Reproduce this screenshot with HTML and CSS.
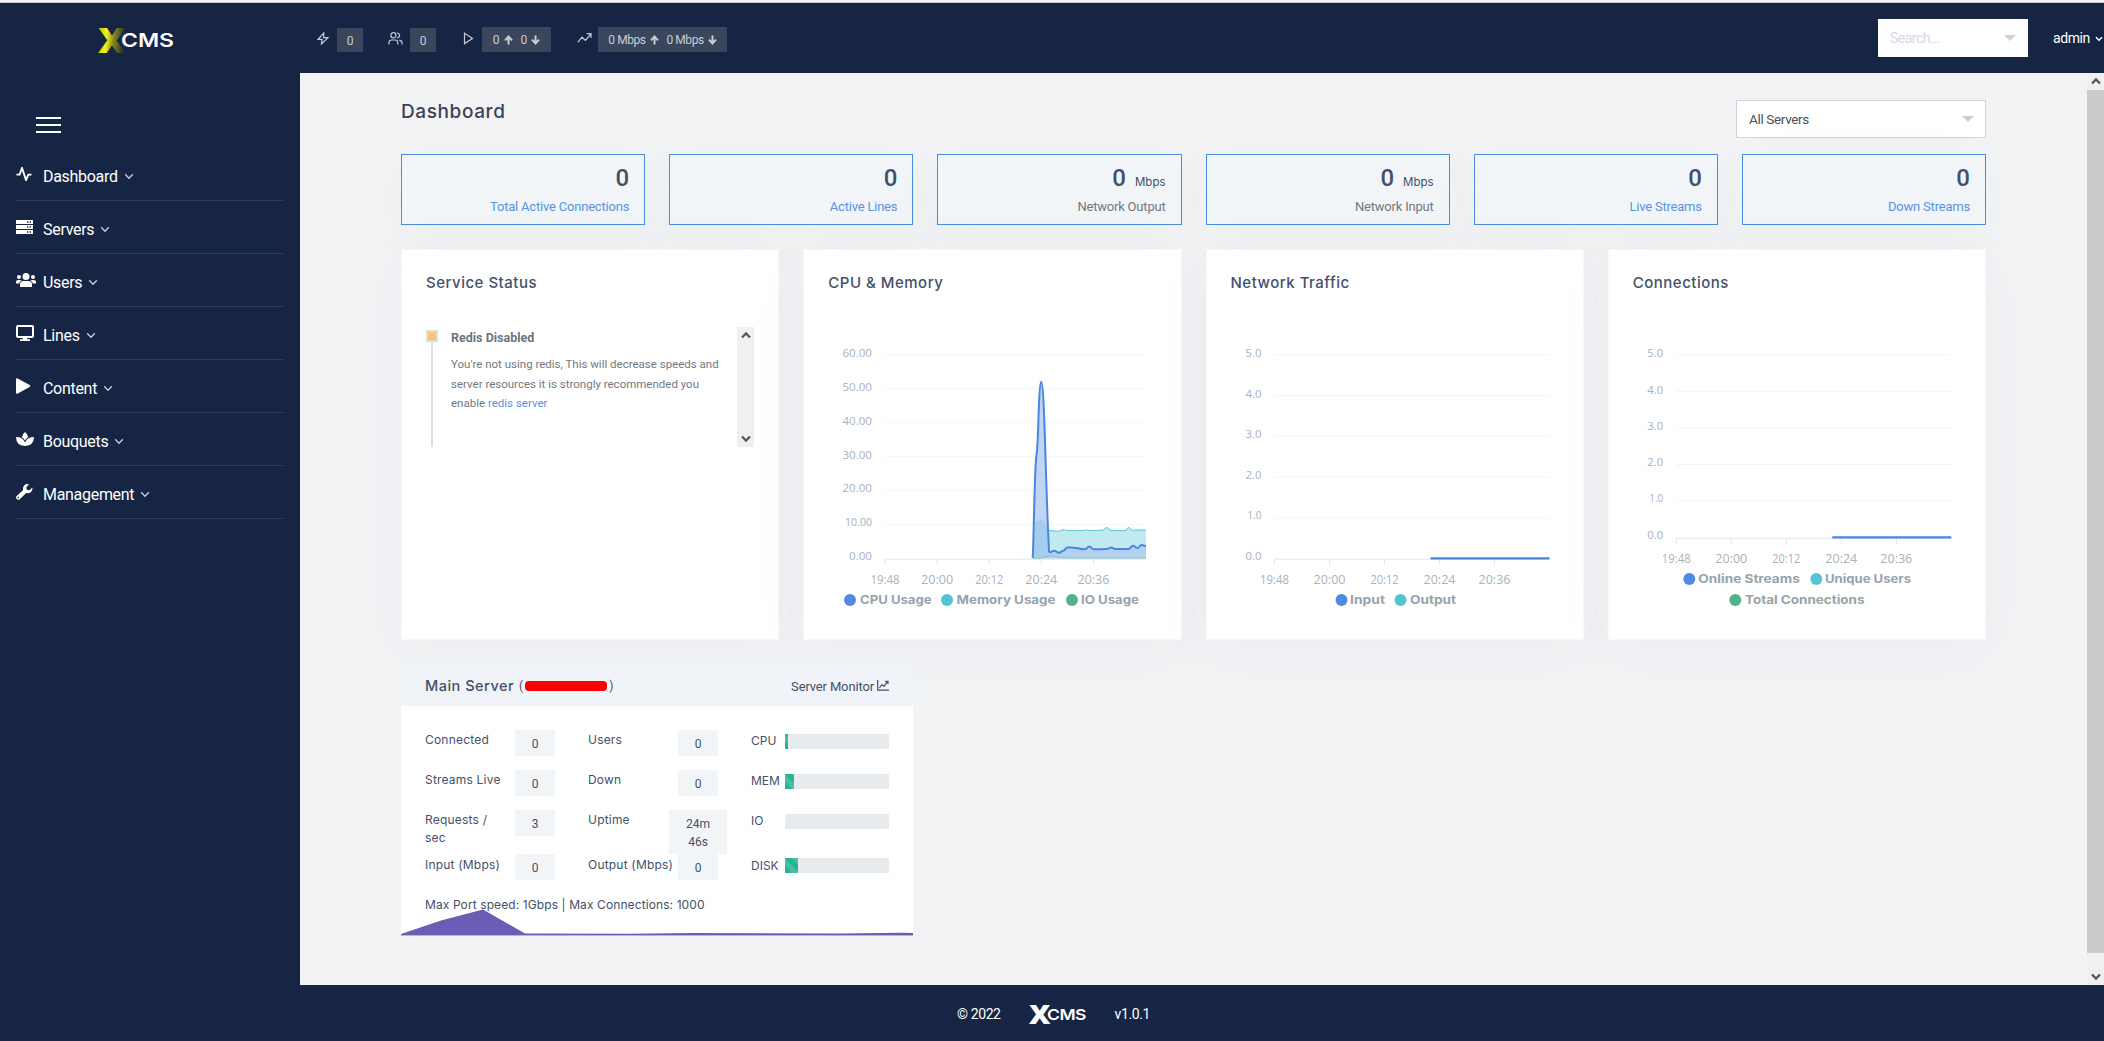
FILE: index.html
```html
<!DOCTYPE html>
<html lang="en">
<head>
  <meta charset="UTF-8">
  <title>XCMS - Dashboard</title>
  <link rel="stylesheet" href="styles.css">
</head>
<body>
  <!-- shared icons -->
  <svg class="sprite">
    <symbol id="down" viewBox="0 0 10 7"><path d="M1.2 1.3 5 5.2 8.8 1.3" fill="none" stroke="currentColor" stroke-width="1.3"/></symbol>
    <symbol id="arrow-up" viewBox="0 0 9 10"><path d="M4.5 9.6V2M1 5.4 4.5 1.6 8 5.4" fill="none" stroke="currentColor" stroke-width="2"/></symbol>
    <symbol id="arrow-down" viewBox="0 0 9 10"><path d="M4.5.4V8M1 4.6 4.5 8.4 8 4.6" fill="none" stroke="currentColor" stroke-width="2"/></symbol>
    <symbol id="sb-up" viewBox="0 0 10 8"><path d="M1 6.5 5 2.4l4 4.1" fill="none" stroke="#555" stroke-width="2.2"/></symbol>
    <symbol id="sb-down" viewBox="0 0 10 8"><path d="M1 1.5 5 5.6l4-4.1" fill="none" stroke="#555" stroke-width="2.2"/></symbol>
  </svg>

  <header class="topbar">
    <div class="brand">
      <svg width="80" height="30" viewBox="0 0 80 30">
        <defs>
          <linearGradient id="gold" x1="0" y1="0" x2="1" y2="0.15">
            <stop offset="0" stop-color="#b8b800"/>
            <stop offset="0.35" stop-color="#f4f21c"/>
            <stop offset="0.6" stop-color="#8a8a10"/>
            <stop offset="1" stop-color="#1a2440"/>
          </linearGradient>
        </defs>
        <text class="logo-x" x="1" y="27" textLength="28" lengthAdjust="spacingAndGlyphs" fill="url(#gold)">X</text>
        <text class="logo-cms" x="24" y="21" textLength="53" lengthAdjust="spacingAndGlyphs">CMS</text>
      </svg>
    </div>
    <div class="stats">
      <div class="stat s1">
        <svg width="12" height="13" viewBox="0 0 12 13"><path d="M6.8 1 1 7.4h4L4.4 12 11 5.6H6.6z" class="line"/></svg>
        <span class="pill small">0</span>
      </div>
      <div class="stat s2">
        <svg width="15" height="13" viewBox="0 0 15 13"><g class="line"><circle cx="5.4" cy="3.3" r="2.6"/><path d="M1 12.6V10.6Q1 8 3.6 8H7.2Q9.8 8 9.8 10.6V12.6M9.2.8Q11.6 1.4 11.6 3.4 11.6 5.2 9.2 5.9M11.2 8.2Q14 8.6 14 11V12.6"/></g></svg>
        <span class="pill small">0</span>
      </div>
      <div class="stat s3">
        <svg width="11" height="13" viewBox="0 0 11 13"><path d="M1.5 1.2 9.5 6.4 1.5 11.6z" class="line"/></svg>
        <span class="pill"><span>0</span><svg width="9" height="10"><use href="#arrow-up"/></svg><span class="second">0</span><svg width="9" height="10"><use href="#arrow-down"/></svg></span>
      </div>
      <div class="stat s4">
        <svg width="15" height="12" viewBox="0 0 15 12"><path d="M.8 10.4 5 5.2 8.4 8.4 13.8 2M9.6 1.6H14V6" class="line"/></svg>
        <span class="pill wide"><span>0 Mbps</span><svg width="9" height="10"><use href="#arrow-up"/></svg><span class="second">0 Mbps</span><svg width="9" height="10"><use href="#arrow-down"/></svg></span>
      </div>
    </div>
    <div class="search"><span>Search...</span><i class="caret"></i></div>
    <div class="user">admin <svg width="8" height="6" viewBox="0 0 8 6"><path d="M1 1.2 4 4.2 7 1.2" fill="none" stroke="#fff" stroke-width="1.5"/></svg></div>
  </header>

  <div class="wrapper">
    <nav class="sidebar">
      <div class="burger"><i></i><i></i><i></i></div>
      <ul class="menu">
        <li>
          <svg class="icon" width="16" height="14" viewBox="0 0 16 14"><path d="M.5 7.6H3.6L6 1 10 13 12.4 7.6H15.5" fill="none" stroke="#fff" stroke-width="1.9"/></svg>
          <span>Dashboard</span><svg class="chev"><use href="#down"/></svg>
        </li>
        <li>
          <svg class="icon" width="17" height="14" viewBox="0 0 17 14"><path d="M0 0H17V4H0zM0 5.1H17V9H0zM0 10.1H17V14H0z" fill="#fff"/><path d="M11 2h1.4M13.6 2H15M11 7h1.4M13.6 7H15M11 12h1.4M13.6 12H15" stroke="#172545" stroke-width="1.4"/></svg>
          <span>Servers</span><svg class="chev"><use href="#down"/></svg>
        </li>
        <li>
          <svg class="icon" width="20" height="14" viewBox="0 0 20 14"><g fill="#fff"><circle cx="10" cy="3.6" r="3.5"/><circle cx="3" cy="4" r="2"/><circle cx="17" cy="4" r="2"/><path d="M4 14V11.4Q4 8 7.4 8H12.6Q16 8 16 11.4V14zM0 10.6V9Q0 7 2 7H4Q5 7 5.6 7.6 3.4 8.6 3.2 10.6zM20 10.6V9Q20 7 18 7H16Q15 7 14.4 7.6 16.6 8.6 16.8 10.6z"/></g></svg>
          <span>Users</span><svg class="chev"><use href="#down"/></svg>
        </li>
        <li>
          <svg class="icon" width="18" height="16" viewBox="0 0 18 16"><rect x="1" y="1" width="16" height="11" rx="1" fill="none" stroke="#fff" stroke-width="2"/><path d="M7 12.5h4l.5 1.8H14V16H4V14.3H6.5z" fill="#fff"/></svg>
          <span>Lines</span><svg class="chev"><use href="#down"/></svg>
        </li>
        <li>
          <svg class="icon" width="15" height="16" viewBox="0 0 15 16"><path d="M0 1.2Q.2-.4 1.8.4L13.6 7Q15 8 13.6 9L1.8 15.6Q.2 16.4 0 14.8z" fill="#fff"/></svg>
          <span>Content</span><svg class="chev"><use href="#down"/></svg>
        </li>
        <li>
          <svg class="icon" width="18" height="14" viewBox="0 0 18 14"><path d="M9 0Q12 2.4 12.2 5.2 10 6.6 9 8.4 8 6.6 5.8 5.2 6 2.4 9 0zM0 5Q6.6 5 9 10.4 11.4 5 18 5 17.8 13.8 9 14 .2 13.8 0 5z" fill="#fff"/></svg>
          <span>Bouquets</span><svg class="chev"><use href="#down"/></svg>
        </li>
        <li>
          <svg class="icon" width="17" height="16" viewBox="0 0 17 16"><path d="M16.3 3.6 13.4 6.3 10.8 5.8 10.3 3.2 13 .4Q10.3-.6 8.2 1.4 6.4 3.3 7.2 5.9L.7 12.1Q-.6 13.6.7 15.1 2.2 16.5 3.7 15.2L10.2 8.9Q13 9.7 15 7.9 16.9 6 16.3 3.6z" fill="#fff"/><circle cx="2.3" cy="13.6" r=".8" fill="#172545"/></svg>
          <span>Management</span><svg class="chev"><use href="#down"/></svg>
        </li>
      </ul>
    </nav>

    <main class="content">
      <div class="page-head">
        <h1>Dashboard</h1>
        <div class="select"><span>All Servers</span><i class="caret"></i></div>
      </div>

      <section class="tiles">
        <div class="tile"><b>0</b><a>Total Active Connections</a></div>
        <div class="tile"><b>0</b><a>Active Lines</a></div>
        <div class="tile"><b>0 <small>Mbps</small></b><span>Network Output</span></div>
        <div class="tile"><b>0 <small>Mbps</small></b><span>Network Input</span></div>
        <div class="tile"><b>0</b><a>Live Streams</a></div>
        <div class="tile"><b>0</b><a>Down Streams</a></div>
      </section>

      <section class="cards">
        <div class="card">
          <h2>Service Status</h2>
          <div class="status">
            <div class="track"><i></i></div>
            <div class="status-text">
              <h3>Redis Disabled</h3>
              <p>You're not using redis, This will decrease speeds and<br>server resources it is strongly recommended you<br>enable <a>redis server</a></p>
            </div>
            <div class="mini-scroll">
              <svg width="10" height="8"><use href="#sb-up"/></svg>
              <svg width="10" height="8"><use href="#sb-down"/></svg>
            </div>
          </div>
        </div>
        <div class="card"><h2>CPU &amp; Memory</h2><svg class="chart" id="cpuChart"></svg></div>
        <div class="card"><h2>Network Traffic</h2><svg class="chart" id="netChart"></svg></div>
        <div class="card"><h2>Connections</h2><svg class="chart" id="connChart"></svg></div>
      </section>

      <section class="server">
        <div class="server-head">
          <h2>Main Server</h2>
          <span class="ip">(<i></i>)</span>
          <a>Server Monitor <svg width="12" height="11" viewBox="0 0 12 11"><path d="M.7 0V10.2H12M2.4 8 5 4.6 7 6.4 10.8 1.4M8.2 1.4H11V4" fill="none" stroke="#44506a" stroke-width="1.2"/></svg></a>
        </div>
        <div class="server-body">
          <div class="row">
            <label>Connected</label><span class="val">0</span>
            <label>Users</label><span class="val">0</span>
            <label>CPU</label><div class="bar"><i style="width:3%"></i></div>
          </div>
          <div class="row">
            <label>Streams Live</label><span class="val">0</span>
            <label>Down</label><span class="val">0</span>
            <label>MEM</label><div class="bar"><i style="width:8.7%"></i></div>
          </div>
          <div class="row tall">
            <label>Requests /<br>sec</label><span class="val">3</span>
            <label>Uptime</label><span class="val uptime">24m<br>46s</span>
            <label>IO</label><div class="bar"></div>
          </div>
          <div class="row last">
            <label>Input (Mbps)</label><span class="val">0</span>
            <label>Output (Mbps)</label><span class="val">0</span>
            <label>DISK</label><div class="bar"><i style="width:12.5%"></i></div>
          </div>
          <p class="limits">Max Port speed: 1Gbps | Max Connections: 1000</p>
        </div>
        <svg class="spark" width="512" height="28" viewBox="0 0 512 28">
          <path d="M0 26 40 12.5 82 1.5 124 25.5 230 25.8 290 25 440 25.4 500 24.8 512 25V27H0z" fill="#6a5db5"/>
          <path d="M0 27.5H512" stroke="#b9b2dc"/>
        </svg>
      </section>
    </main>

    <div class="scrollbar">
      <svg width="10" height="8"><use href="#sb-up"/></svg>
      <div class="thumb"></div>
      <svg width="10" height="8"><use href="#sb-down"/></svg>
    </div>
  </div>

  <footer class="footer">
    <span>© 2022</span>
    <svg width="60" height="24" viewBox="0 0 60 24">
      <text class="logo-x foot" x="1" y="21.5" textLength="21" lengthAdjust="spacingAndGlyphs">X</text>
      <text class="logo-cms foot" x="19" y="17.5" textLength="39" lengthAdjust="spacingAndGlyphs">CMS</text>
    </svg>
    <span>v1.0.1</span>
  </footer>

  <script>
    const times = ['19:48', '20:00', '20:12', '20:24', '20:36'];
    const timeWidths = [29, 32, 28, 32, 32];

    function label(x, y, str, width, anchor, cls) {
      return `<text x="${x}" y="${y}" text-anchor="${anchor}" class="${cls}" textLength="${width}" lengthAdjust="spacingAndGlyphs">${str}</text>`;
    }

    // grid, axis, tick labels and legend
    function drawChart(id, o) {
      let out = '';
      const n = o.labels.length - 1;
      o.labels.forEach((t, i) => {
        const y = o.top + (o.bottom - o.top) * i / n;
        if (i < n) out += `<line class="grid" x1="${o.left}" x2="${o.right}" y1="${y}" y2="${y}"/>`;
        out += label(o.left - 13, y + 2.6 - 1.6 * i / n, t, o.labelWidth(t), 'end', 'tick');
      });
      out += `<line class="axis" x1="${o.left}" x2="${o.right}" y1="${o.bottom + .5}" y2="${o.bottom + .5}"/>`;
      times.forEach((t, i) => {
        const x = o.left + o.step * i;
        out += `<line class="axis" x1="${x}" x2="${x}" y1="${o.bottom}" y2="${o.bottom + 6.5}"/>`;
        out += label(x, o.bottom + 25, t, timeWidths[i], 'middle', 'time');
      });
      out += o.series;
      o.legend.forEach(l => {
        out += `<circle cx="${l[0]}" cy="${l[1]}" r="6" fill="${l[2]}"/>`;
        out += label(l[3], l[1] + 4, l[4], l[5], 'start', 'legend');
      });
      document.getElementById(id).innerHTML = out;
    }

    // smooth line through the points
    function curve(points) {
      let d = `M${points[0]}`;
      for (let i = 1; i < points.length; i++) {
        const [x0, y0] = points[i - 1], [x1, y1] = points[i], m = (x0 + x1) / 2;
        d += `C${m} ${y0} ${m} ${y1} ${x1} ${y1}`;
      }
      return d;
    }

    const cpu = 'M204.7 249C206 225 206.5 155 208.5 146C210.5 136 210.5 73 213.3 72.7C216.5 73 217.5 175 221 242';
    const cpuTail = curve([[221, 242], [222, 243.5], [226.3, 241.7], [231, 243.7], [235.3, 241.7], [239.3, 238.5], [245.3, 238.7], [257, 240.3], [261.3, 237.5], [265.7, 240.3], [278.7, 240], [283, 238.5], [287.3, 240], [300.3, 240], [305, 236.7], [309.3, 239], [313.7, 236], [318, 237.3]]).replace('M221,242', '');
    const mem = curve([[205.5, 214], [209, 213.7], [213.3, 211], [221.3, 221.5], [231, 222.2], [235, 220.8], [240, 221.6], [254, 221.6], [257, 221], [262, 221.6], [274, 221.2], [279, 218.6], [283, 221.6], [297, 221.6], [300.7, 218.5], [304, 221.2], [318, 221]]);

    drawChart('cpuChart', {
      left: 57, right: 318, top: 45.8, bottom: 249.7, step: 52.1,
      labels: ['60.00', '50.00', '40.00', '30.00', '20.00', '10.00', '0.00'],
      labelWidth: t => t.length > 4 ? (t[0] == '1' ? 27 : 29.5) : 23,
      series: `<path d="${mem}V249.5H205.5Z" fill="#56c2d6" fill-opacity=".37"/>
        <path d="${mem}" fill="none" stroke="#56c2d6"/>
        <path d="${cpu + cpuTail}V249.5H204.7Z" fill="#b0c9f0" fill-opacity=".8"/>
        <path d="${cpu + cpuTail}" fill="none" stroke="#4a86dc" stroke-width="2"/>
        <path d="M206 249V214L209 213.7Q213.3 208 220 221V242L222 249Z" fill="#56c2d6" fill-opacity=".15"/>
        <path d="M205 249.5H214Q220 246.2 223 246.5 230 248.5 244 249H318" fill="none" stroke="#52b08a" stroke-opacity=".4"/>`,
      legend: [[22, 291, '#4f8ae0', 32, 'CPU Usage', 71.5], [119, 291, '#56c2d6', 128.5, 'Memory Usage', 99], [244, 291, '#52b08a', 253, 'IO Usage', 58]]
    });
    drawChart('netChart', {
      left: 43.5, right: 318.5, top: 45.8, bottom: 249.7, step: 55,
      labels: ['5.0', '4.0', '3.0', '2.0', '1.0', '0.0'],
      labelWidth: t => t[0] == '1' ? 14 : 16,
      series: '<path d="M199.5 249.3H318.5" stroke="#4a86dc" stroke-width="2.3"/>',
      legend: [[110.5, 291, '#4f8ae0', 119, 'Input', 35], [169.5, 291, '#56c2d6', 179, 'Output', 46]]
    });
    drawChart('connChart', {
      left: 43.3, right: 318.3, top: 45.8, bottom: 228.7, step: 55,
      labels: ['5.0', '4.0', '3.0', '2.0', '1.0', '0.0'],
      labelWidth: t => t[0] == '1' ? 14 : 16,
      series: '<path d="M199.3 228.3H318.3" stroke="#4a86dc" stroke-width="2.3"/>',
      legend: [[56.3, 270, '#4f8ae0', 65.3, 'Online Streams', 101.5], [183.3, 270, '#56c2d6', 192, 'Unique Users', 86], [102.3, 291, '#52b08a', 112, 'Total Connections', 119.5]]
    });
  </script>
</body>
</html>
```

FILE: styles.css
```css
* {
  box-sizing: border-box;
}
body {
  margin: 0;
  height: 1041px;
  display: flex;
  flex-direction: column;
  overflow: hidden;
  font-family: Roboto, "Liberation Sans", sans-serif;
  font-size: 14px;
  color: #44506a;
  background: #172545;
}
h1, h2, h3, p, ul {
  margin: 0;
  padding: 0;
}
.sprite {
  display: none;
}
a {
  color: #5c92e4;
}
.line {
  fill: none;
  stroke: #c3c8d3;
  stroke-width: 1.2;
}

/* header */
.topbar {
  height: 73px;
  flex: none;
  display: flex;
  align-items: flex-start;
  border-top: 2px solid #f4f4f6;
  box-shadow: inset 0 1px 0 #c9cbd2;
}
.brand {
  width: 300px;
  padding: 24px 0 0 97px;
}
.brand svg,
.footer svg {
  display: block;
  overflow: visible;
}
.logo-x {
  font: 800 35px "Open Sans", sans-serif;
}
.logo-cms {
  font: 600 19px Inter, sans-serif;
  fill: #fff;
}
.logo-x.foot {
  font-size: 27px;
  fill: #fff;
}
.logo-cms.foot {
  font-size: 15px;
}
.stats {
  display: flex;
  width: 1578px;
  padding: 25px 0 0 17px;
}
.stat {
  display: flex;
  align-items: flex-start;
}
.stat > svg {
  margin-top: 5px;
}
.s1 { width: 71px; gap: 8px; }
.s2 { width: 75px; gap: 7px; }
.s3 { width: 114px; gap: 8px; }
.s4 { gap: 6px; }
.pill {
  width: 69px;
  height: 25px;
  padding-top: 1px;
  display: flex;
  align-items: center;
  justify-content: center;
  gap: 4px;
  background: #3a465c;
  color: #c9cdd6;
  font-size: 12px;
  white-space: nowrap;
}
.pill.small {
  width: 26px;
  height: 24px;
  margin-top: 1px;
  padding-top: 2px;
}
.pill.wide {
  width: 129px;
  letter-spacing: -0.45px;
}
.second {
  margin-left: 4px;
}
.search {
  width: 150px;
  height: 38px;
  margin-top: 17px;
  padding: 0 12px;
  display: flex;
  align-items: center;
  justify-content: space-between;
  background: #fff;
  color: #d3d8e6;
  letter-spacing: -0.5px;
}
.caret {
  border: 6px solid transparent;
  border-top-color: #ccd1e2;
  border-bottom: 0;
}
.user {
  padding: 28px 0 0 25px;
  color: #fff;
  letter-spacing: -0.4px;
  white-space: nowrap;
}
.user svg {
  margin: 0 0 1px 2px;
}

/* sidebar */
.wrapper {
  height: 912px;
  flex: none;
  display: flex;
}
.sidebar {
  width: 300px;
  padding: 44px 16px 0;
}
.burger {
  width: 25px;
  margin-left: 20px;
  display: grid;
  gap: 5px;
}
.burger i {
  height: 2px;
  background: #fff;
}
.menu {
  margin-top: 15px;
  list-style: none;
}
.menu li {
  height: 53px;
  padding-top: 4px;
  display: grid;
  grid-template-columns: 27px auto 1fr;
  align-items: center;
  border-bottom: 1px solid #2f3b59;
  color: #fff;
  font-size: 16px;
  letter-spacing: -0.3px;
}
.menu .icon {
  margin-bottom: 4px;
}
.chev {
  width: 10px;
  height: 7px;
  margin-left: 6px;
  color: #c9cdd8;
}

/* content */
.content {
  width: 1787px;
  padding: 27px 101px 0;
  background: #f2f3f5;
  overflow: hidden;
}
.page-head {
  height: 54px;
  display: flex;
  justify-content: space-between;
}
h1 {
  font: 500 19px/24px Inter, sans-serif;
  letter-spacing: 0.6px;
  color: #3b4357;
}
.select {
  width: 250px;
  height: 38px;
  padding: 0 11px 0 12px;
  display: flex;
  align-items: center;
  justify-content: space-between;
  border: 1px solid #ced4da;
  background: #fff;
  color: #495057;
  font-size: 13.5px;
  letter-spacing: -0.35px;
}
.select .caret {
  border-top-color: #c0d0dc;
}
.tiles {
  display: grid;
  grid-template-columns: repeat(6, 1fr);
  gap: 24px;
}
.tile {
  height: 71px;
  padding: 10px 15px 0;
  border: 1px solid #4d8be0;
  background: #f1f5f8;
  box-shadow: 0 10px 60px rgba(70, 80, 110, 0.03);
  text-align: right;
  color: #74787e;
}
.tile b {
  display: block;
  height: 33px;
  line-height: 26px;
  font-size: 24px;
  font-weight: 500;
  color: #44506a;
}
.tile small {
  margin-left: 3px;
  font: 400 11.5px Inter, sans-serif;
}
.tile a,
.tile span {
  display: block;
  line-height: 17px;
  font-size: 13px;
  letter-spacing: -0.2px;
}
.cards {
  margin-top: 24px;
  display: grid;
  grid-template-columns: repeat(4, minmax(0, 1fr));
  gap: 24px;
}
.card {
  height: 391px;
  padding: 23px 24px;
  border: 1px solid #f6f8f9;
  background: #fff;
  box-shadow: 0 10px 60px rgba(70, 80, 110, 0.04);
}
h2 {
  font: 500 15px/20px Inter, sans-serif;
  letter-spacing: 0.5px;
  color: #44506a;
}
.chart {
  display: block;
  width: 100%;
  height: 307px;
  margin-top: 16px;
  overflow: visible;
}
.grid {
  stroke: #f2f5f8;
}
.axis {
  stroke: #e3e5e8;
}
.tick,
.time {
  font: 11px "Open Sans", sans-serif;
  fill: #a9b2ba;
}
.time {
  font-size: 12px;
}
.legend {
  font: 700 12px Inter, sans-serif;
  fill: #96a3ad;
}

/* service status */
.status {
  height: 120px;
  margin-top: 34px;
  display: flex;
}
.track {
  width: 12px;
  margin-top: 3px;
  background: linear-gradient(#dbdfe4, #dbdfe4) 5px 0 / 2px 100% no-repeat;
}
.track i {
  display: block;
  height: 12px;
  border: 2px solid #dbdfe4;
  background: #f8ca67;
}
.status-text {
  flex: 1;
  margin-left: 13px;
  color: #74787e;
  white-space: nowrap;
}
.status-text h3 {
  height: 28px;
  line-height: 22px;
  font-size: 12.5px;
  font-weight: 700;
  letter-spacing: 0;
  color: #6c757d;
}
.status-text p {
  font-size: 11.5px;
  line-height: 19.5px;
}
.mini-scroll {
  width: 17px;
  padding: 4px 0;
  display: flex;
  flex-direction: column;
  align-items: center;
  justify-content: space-between;
  background: #f0f0f0;
}

/* server card */
.server {
  position: relative;
  width: 512px;
  height: 272px;
  margin-top: 24px;
  background: #fff;
}
.server-head {
  height: 42px;
  padding: 2px 24px 0 24px;
  display: flex;
  align-items: center;
  background: #f0f4f8;
}
.server-head h2 {
  font-size: 14.5px;
}
.ip {
  margin-left: 5px;
  display: flex;
  align-items: center;
  gap: 2px;
  font-size: 12px;
}
.ip i {
  width: 82px;
  height: 10px;
  border-radius: 4px;
  background: #f00;
}
.server-head a {
  margin-left: auto;
  font-size: 13px;
  letter-spacing: -0.15px;
  color: #44506a;
}
.server-body {
  padding: 24px 24px 0;
}
.row {
  height: 40px;
  display: grid;
  grid-template-columns: 90px 73px 90px 73px 34px 104px;
  align-items: start;
}
.row.tall {
  height: 44px;
}
.row label {
  padding-top: 1px;
  font: 12px/18px Inter, sans-serif;
  letter-spacing: 0.2px;
  white-space: nowrap;
}
.row.last label {
  padding-top: 2px;
}
.row label:nth-of-type(3) {
  padding-top: 2px;
  letter-spacing: 0;
}
.row.last label:nth-of-type(3) {
  padding-top: 3px;
}
.val {
  width: 40px;
  height: 26px;
  line-height: 28px;
  background: #f1f5f8;
  font-size: 12px;
  text-align: center;
}
.uptime {
  width: 58px;
  height: 44px;
  margin-left: -9px;
  padding-top: 5px;
  line-height: 18px;
}
.bar {
  height: 15px;
  margin-top: 4px;
  background: #e8ebee;
}
.bar i {
  display: block;
  height: 100%;
  background: repeating-linear-gradient(45deg, #26b497 0 5px, #47bfa7 5px 10px);
}
.limits {
  margin-top: 2px;
  font: 12px/18px Inter, sans-serif;
  letter-spacing: 0.1px;
}
.spark {
  position: absolute;
  left: 0;
  bottom: 0;
}

/* page scrollbar */
.scrollbar {
  width: 17px;
  display: flex;
  flex-direction: column;
  align-items: center;
  justify-content: space-between;
  padding: 4px 0;
  background: #f0f0f0;
}
.thumb {
  width: 17px;
  height: 863px;
  margin: 5px 0 auto;
  background: #cbcbcb;
}

.footer {
  flex: 1;
  padding: 2px 0 0 3px;
  display: flex;
  align-items: center;
  justify-content: center;
  gap: 27px;
  color: #fff;
  letter-spacing: -0.4px;
}
```
